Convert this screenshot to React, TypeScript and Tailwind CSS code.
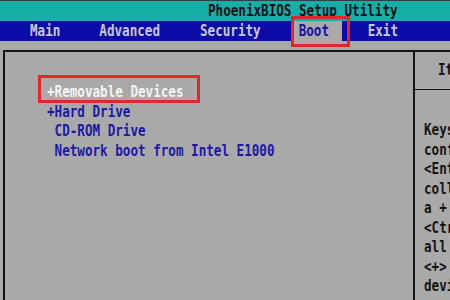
import React from "react";

const font = { fontFamily: '"DejaVu Sans Mono", "Liberation Mono", monospace' };

function T({ children, className = "" }: { children: React.ReactNode; className?: string }) {
  return <span className={"inline-block scale-y-[1.3] whitespace-pre " + className}>{children}</span>;
}

export default function App() {
  const help = [
    "Keys used to view or",
    "configure devices:",
    "<Enter> expands or",
    "collapses devices with",
    "a + or -",
    "<Ctrl+Enter> expands",
    "all",
    "<+> and <-> moves the",
    "device up or down.",
  ];
  return (
    <div
      className="relative flex h-[300px] w-[450px] flex-col overflow-hidden bg-[#a9a9a9] text-[12.6px] font-bold"
      style={font}
    >
      {/* title bar */}
      <div className="flex h-[21px] shrink-0 items-center border-t border-[#3a3a3a] bg-[#17aea8] pl-[208px] text-[#101018]">
        <T>PhoenixBIOS Setup Utility</T>
      </div>
      {/* menu bar */}
      <div className="relative flex h-[20px] shrink-0 items-stretch bg-[#0c0ca8] text-[#c8c8dc]">
        <div className="flex items-center pl-[30px]">
          <T>Main</T>
        </div>
        <div className="flex items-center pl-[39px]">
          <T>Advanced</T>
        </div>
        <div className="flex items-center pl-[40px]">
          <T>Security</T>
        </div>
        <div className="ml-[32px] flex w-[49px] items-center bg-[#a9a9a9] pl-[6px] text-[#1414a0]">
          <T>Boot</T>
        </div>
        <div className="flex items-center pl-[26px]">
          <T>Exit</T>
        </div>
      </div>
      {/* body */}
      <div className="flex min-h-0 flex-1 pl-[3px] pt-[9px]">
        <div className="flex min-w-0 flex-1 border-l-2 border-t-2 border-[#141414]">
          <div className="flex w-[408px] shrink-0 flex-col pl-[42px] pt-[30px] leading-[19.5px] text-[#1a1aa4]">
            <div className="text-[#f4f4f4]">
              <T>+Removable Devices</T>
            </div>
            <div>
              <T>+Hard Drive</T>
            </div>
            <div>
              <T> CD-ROM Drive</T>
            </div>
            <div>
              <T> Network boot from Intel E1000</T>
            </div>
          </div>
          <div className="flex min-w-0 flex-1 flex-col overflow-hidden border-l-2 border-[#141414] text-[#141414]">
            <div className="flex h-[38px] shrink-0 items-center border-b border-[#141414] pl-[23px]">
              <T>Item Specific Help</T>
            </div>
            <div className="flex flex-col pl-[9px] pt-[30px] leading-[19.5px]">
              {help.map((l, i) => (
                <div key={i}>
                  <T>{l}</T>
                </div>
              ))}
            </div>
          </div>
        </div>
      </div>
      {/* annotation boxes */}
      <div className="absolute left-[291px] top-[16px] h-[31px] w-[59px] border-[3px] border-[#e3262b]" />
      <div className="absolute left-[38px] top-[75px] h-[28px] w-[162px] border-[3px] border-[#e3262b]" />
    </div>
  );
}
